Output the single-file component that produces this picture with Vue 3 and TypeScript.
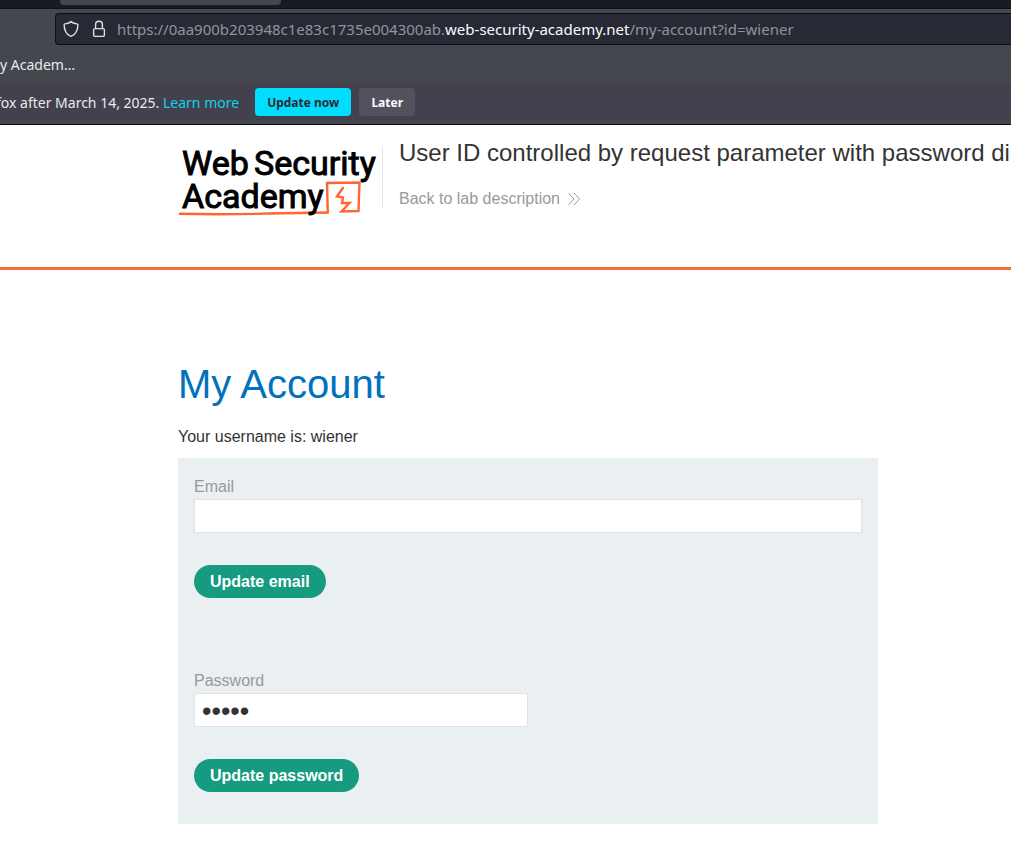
<script setup lang="ts">
import { ref } from 'vue'

const email = ref('')
const password = ref('peter')
const url = {
  prefix: 'https://0aa900b203948c1e83c1735e004300ab.',
  domain: 'web-security-academy.net',
  path: '/my-account?id=wiener',
}
</script>

<template>
  <div class="window">
    <div class="chrome">
      <div class="tabs"><div class="tab"></div></div>
      <div class="toolbar">
        <div class="address">
          <svg class="shield" width="16" height="18" viewBox="0 0 16 18" aria-hidden="true">
            <path d="M8 1.6C6.2 3 4 3.7 1.9 3.9c-.5 0-.8.4-.8.8.1 5.3 2.2 9.500 6.400 11.500q.5.2 1 0c4.200-2 6.300-6.200 6.400-11.500 0-.4-.3-.8-.8-.8C12 3.700 9.800 3 8 1.600z" />
          </svg>
          <svg class="lock" width="14" height="18" viewBox="0 0 14 18" aria-hidden="true">
            <rect x="1.600" y="8.600" width="10.800" height="7.800" rx="1.500" />
            <path d="M3.600 8.600V4.700a3.400 3.400 0 0 1 6.800 0v3.900" />
          </svg>
          <span class="url">{{ url.prefix }}<b>{{ url.domain }}</b>{{ url.path }}</span>
        </div>
      </div>
      <div class="bookmarks"><a href="#">y Academ…</a></div>
      <div class="notice">
        <span>fox after March 14, 2025. <a href="#">Learn more</a></span>
        <div class="actions">
          <button type="button" class="primary">Update now</button>
          <button type="button">Later</button>
        </div>
      </div>
    </div>

    <header class="lab-header">
      <a class="logo" href="#" aria-label="Web Security Academy">
        <svg width="202" height="72" viewBox="0 0 202 72">
          <g class="strokes">
            <path class="underline" d="M1 66.800Q50 67.800 104 66.300L150.800 65.500" />
            <path d="M149.800 66L149 36L181.500 35.500L180.500 64L163.500 64.500L171.500 56L164 56L165 50.500L159 49.500L165.500 40" />
          </g>
          <text x="4" y="28">Web</text>
          <text x="76" y="28">Security</text>
          <text x="4" y="61">Academy</text>
        </svg>
      </a>
      <div class="title">
        <h2>User ID controlled by request parameter with password disclosure</h2>
        <a class="back" href="#">Back to lab description
          <svg width="12" height="14" viewBox="0 0 12 14" aria-hidden="true">
            <path d="M.5 1l5.500 6l-5.500 6M6 1l5.500 6L6 13" />
          </svg>
        </a>
      </div>
    </header>

    <main>
      <h1>My Account</h1>
      <p>Your username is: wiener</p>
      <div class="panel">
        <form @submit.prevent>
          <label for="email">Email</label>
          <input id="email" v-model="email" type="email" />
          <button type="submit">Update email</button>
        </form>
        <form @submit.prevent>
          <label for="password">Password</label>
          <input id="password" v-model="password" class="half" type="password" />
          <button type="submit">Update password</button>
        </form>
      </div>
    </main>
  </div>
</template>

<style>
body {
  margin: 0;
  background: #fff;
}
</style>

<style scoped>
* {
  box-sizing: border-box;
}
.window {
  overflow: hidden;
  font-family: "Liberation Sans", Arial, sans-serif;
  font-size: 16px;
  color: #333;
}
a {
  text-decoration: none;
}
.chrome {
  background: #44474e;
  border-bottom: 1px solid #0f1015;
  padding-bottom: 4px;
  font-family: "Noto Sans", sans-serif;
  font-size: 14px;
  color: #e9e9ec;
}
.tabs {
  height: 9px;
  background: #191b20;
  border-bottom: 1px solid #0f1117;
}
.tab {
  width: 221px;
  height: 5px;
  margin-left: 60px;
  background: #44474e;
  border-radius: 0 0 4px 4px;
}
.toolbar {
  padding: 4px 0 0 55px;
}
.address {
  display: flex;
  align-items: center;
  height: 32px;
  padding-left: 7px;
  background: #272935;
  border: 1px solid #0d0f15;
  border-right: 0;
  border-radius: 4px 0 0 4px;
  white-space: nowrap;
}
.address svg {
  flex: none;
  fill: none;
  stroke: #dedee2;
  stroke-width: 1.4;
}
.lock {
  margin-left: 13px;
}
.url {
  margin-left: 11px;
  font-size: 15px;
  color: #93949a;
}
.url b {
  font-weight: 400;
  color: #fbfbfe;
}
.bookmarks {
  height: 39px;
  line-height: 39px;
}
.bookmarks a {
  color: inherit;
}
.notice {
  display: flex;
  align-items: center;
  gap: 16px;
  height: 36px;
  margin-left: -4px;
  background: #44414e;
  white-space: nowrap;
}
.notice a {
  color: #0dd3ea;
}
.actions {
  display: flex;
  gap: 8px;
}
.actions button {
  height: 28px;
  padding: 0 12px;
  border: 0;
  border-radius: 4px;
  background: #53515e;
  color: #fbfbfe;
  font: 700 12px "Noto Sans", sans-serif;
}
.actions .primary {
  background: #00ddff;
  color: #2b2a33;
}
.lab-header {
  display: flex;
  height: 145px;
  padding: 22px 0 0 178px;
  border-bottom: 3px solid #f96a43;
}
.logo {
  flex: none;
  width: 205px;
  height: 62px;
  border-right: 1px solid #e6e6e6;
}
.logo svg {
  display: block;
  overflow: visible;
}
.logo text {
  font: 400 34px Roboto, sans-serif;
  fill: #000;
  stroke: #000;
  stroke-width: 1;
}
.strokes {
  fill: none;
  stroke: #ff6633;
  stroke-width: 2.4;
}
.title {
  flex: none;
  margin: -10px 0 0 16px;
  white-space: nowrap;
}
h2 {
  margin: 0;
  font-size: 24px;
  font-weight: 400;
  line-height: 32px;
}
.back {
  display: flex;
  align-items: center;
  gap: 8px;
  margin-top: 20px;
  line-height: 20px;
  color: #999;
}
.back svg {
  fill: none;
  stroke: #999;
}
main {
  padding: 90px 20px 27px 178px;
}
h1 {
  margin: 0;
  font-size: 40px;
  font-weight: 400;
  line-height: 48px;
  color: #0071bc;
}
p {
  margin: 16px 0 9px;
  line-height: 25px;
}
.panel {
  display: grid;
  gap: 70px;
  max-width: 700px;
  padding: 16px 16px 32px;
  background: #eaeff2;
}
label {
  display: block;
  line-height: 25px;
  color: #999;
}
input {
  display: block;
  width: 100%;
  height: 34px;
  padding: 0 7px;
  border: 1px solid #e1e3e4;
  background: #fff;
  color: #333;
  font: 16px "Liberation Sans", sans-serif;
}
input.half {
  width: 50%;
  padding-top: 2px;
  font-size: 27px;
}
form button {
  display: block;
  height: 33px;
  margin-top: 32px;
  padding: 0 16px;
  border: 0;
  border-radius: 17px;
  background: #169b80;
  color: #fff;
  font: bold 16px "Liberation Sans", sans-serif;
}
</style>
